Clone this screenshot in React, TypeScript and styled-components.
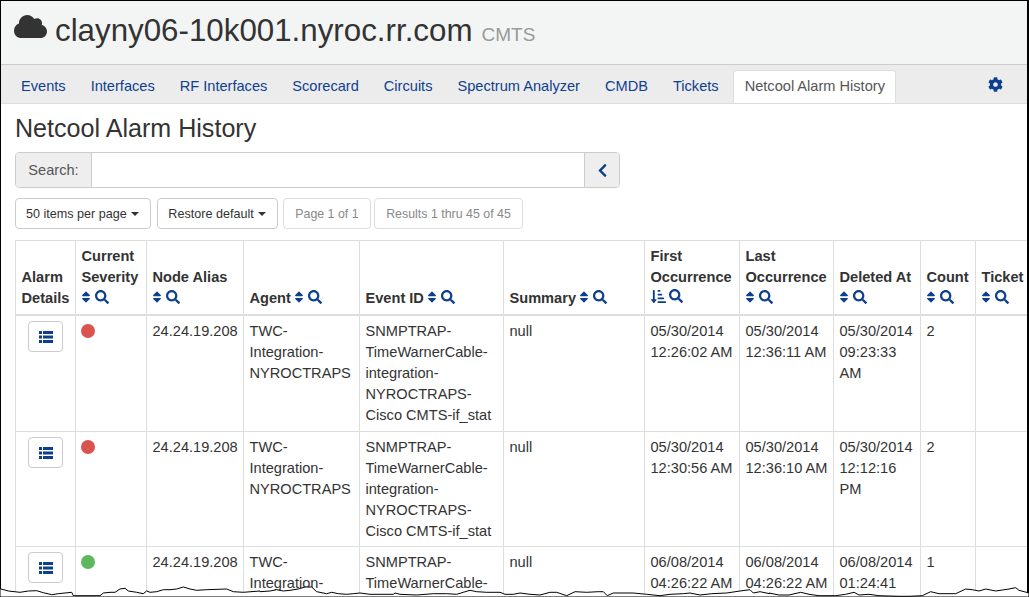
import React from "react";
import styled, { createGlobalStyle } from "styled-components";
import { FaCloud, FaCog, FaSort, FaSearch, FaChevronLeft, FaSortAmountDownAlt } from "react-icons/fa";

const Global = createGlobalStyle`
  html, body { margin: 0; padding: 0; background: #fff; }
  body { font-family: "Liberation Sans", Arial, sans-serif; font-size: 14.6px; color: #333; }
`;

const Viewport = styled.div`
  position: relative;
  width: 1029px;
  height: 597px;
  overflow: hidden;
`;
const Frame = styled.div`
  width: 1029px;
  height: 597px;
  box-sizing: border-box;
  overflow: hidden;
  border-top: 1px solid #000;
  border-left: 1px solid #000;
  border-right: 2px solid #000;
  background: #fff;
`;
const Header = styled.header`
  height: 64px;
  box-sizing: border-box;
  background: #f3f5f5;
  border-bottom: 1px solid #ccc;
  display: flex;
  align-items: baseline;
  padding: 12px 0 0 13px;
`;
const CloudMark = styled.span`
  display: inline-flex;
  width: 41px;
  color: #333;
  font-size: 33px;
  align-self: flex-start;
  margin-top: -3px;
`;
const Title = styled.h1`
  margin: 0;
  font-size: 31.3px;
  font-weight: 400;
  line-height: 36px;
  color: #333;
`;
const Small = styled.small`
  font-size: 19px;
  color: #999;
  margin-left: 9px;
`;
const Nav = styled.nav`
  height: 39px;
  box-sizing: border-box;
  background: #ececec;
  border-bottom: 1px solid #ddd;
  display: flex;
  align-items: flex-end;
  padding-left: 7.5px;
`;
const Tab = styled.a<{ $active?: boolean }>`
  height: 33px;
  line-height: 30px;
  padding: 0 ${(p) => (p.$active ? 10.5 : 11.5)}px;
  margin-left: ${(p) => (p.$active ? 2 : 0)}px;
  border-radius: 4px 4px 0 0;
  box-sizing: border-box;
  color: ${(p) => (p.$active ? "#555" : "#0e3f8e")};
  background: ${(p) => (p.$active ? "#fff" : "transparent")};
  border: 1px solid ${(p) => (p.$active ? "#ddd" : "transparent")};
  border-bottom-color: ${(p) => (p.$active ? "#fff" : "transparent")};
  white-space: nowrap;
`;
const Gear = styled.span`
  margin: 1px 24px 0 auto;
  color: #0e3f8e;
  font-size: 15px;
  align-self: center;
  display: inline-flex;
`;
const Main = styled.main`
  padding: 0 0 0 14px;
`;
const Heading = styled.h2`
  margin: 0;
  padding-top: 9px;
  height: 48px;
  box-sizing: border-box;
  font-size: 25.1px;
  line-height: 30px;
  font-weight: 400;
  color: #333;
`;
const SearchGroup = styled.div`
  display: flex;
  width: 605px;
  height: 36px;
  box-sizing: border-box;
  border: 1px solid #ccc;
  border-radius: 4px;
  overflow: hidden;
`;
const SearchLabel = styled.span`
  width: 76px;
  box-sizing: border-box;
  background: #eee;
  border-right: 1px solid #ccc;
  display: flex;
  align-items: center;
  justify-content: center;
  color: #555;
`;
const SearchInput = styled.div`
  flex: 1;
`;
const SearchButton = styled.span`
  width: 35px;
  box-sizing: border-box;
  background: #eee;
  border-left: 1px solid #ccc;
  color: #0e3f8e;
  font-size: 15px;
  display: flex;
  align-items: center;
  justify-content: center;
`;
const Toolbar = styled.div`
  display: flex;
  margin-top: 10px;
  margin-bottom: 11px;
`;
const ToolButton = styled.span<{ $muted?: boolean; $gap?: number }>`
  height: 31px;
  box-sizing: border-box;
  border: 1px solid ${(p) => (p.$muted ? "#ddd" : "#ccc")};
  border-radius: 4px;
  padding: 0 11.5px 0 ${(p) => (p.$muted ? 11 : 10)}px;
  margin-left: ${(p) => p.$gap ?? 0}px;
  font-size: ${(p) => (p.$muted ? 12.4 : 12.6)}px;
  display: inline-flex;
  align-items: center;
  color: ${(p) => (p.$muted ? "#888" : "#333")};
  background: #fff;
`;
const Caret = styled.span`
  width: 0;
  height: 0;
  margin-left: 4px;
  border-top: 4px solid #333;
  border-left: 4px solid transparent;
  border-right: 4px solid transparent;
`;
const Table = styled.table`
  table-layout: fixed;
  border-collapse: collapse;
  width: 1025px;
  font-size: 14.6px;
  line-height: 20.8px;
`;
const Th = styled.th`
  border: 1px solid #ddd;
  border-bottom: 2px solid #ddd;
  padding: 5px 0 6px 5.5px;
  text-align: left;
  vertical-align: bottom;
  font-weight: 700;
  color: #333;
  white-space: nowrap;
`;
const Td = styled.td`
  border: 1px solid #ddd;
  padding: 5px 0 5px 5.5px;
  vertical-align: top;
  color: #333;
  white-space: nowrap;
`;
const Row = styled.tr`
  &:first-child > td {
    padding-bottom: 6px;
  }
`;
const IconTd = styled(Td)`
  text-align: center;
  padding: 5px 0 4px;
`;
const Controls = styled.span<{ $sorted?: boolean }>`
  display: inline-flex;
  align-items: center;
  gap: ${(p) => (p.$sorted ? 3 : 2)}px;
  margin-left: ${(p) => (p.$sorted ? 0 : -3)}px;
  color: #0e3f8e;
  font-size: 14px;
  vertical-align: -1px;
`;
const DetailsButton = styled.span`
  display: inline-flex;
  width: 35px;
  height: 31px;
  box-sizing: border-box;
  border: 1px solid #ccc;
  border-radius: 4px;
  align-items: center;
  justify-content: center;
  color: #0e3f8e;
`;
const Dot = styled.span<{ $color: string }>`
  display: block;
  width: 14px;
  height: 14px;
  margin: 3px 0 0 -0.5px;
  border-radius: 50%;
  background: ${(p) => p.$color};
`;
const TornEdge = styled.svg`
  position: absolute;
  left: 0;
  bottom: 0;
  display: block;
`;

const ListGlyph = () => (
  <svg width="14" height="12" viewBox="0 0 14 12" fill="currentColor">
    <rect x="0" y="0" width="3" height="3" />
    <rect x="4" y="0" width="10" height="3" />
    <rect x="0" y="4.5" width="3" height="3" />
    <rect x="4" y="4.5" width="10" height="3" />
    <rect x="0" y="9" width="3" height="3" />
    <rect x="4" y="9" width="10" height="3" />
  </svg>
);

const widths = [60, 71, 97, 116, 144, 141, 95, 94, 87, 55, 65];
const heads: { t: string[]; sort?: boolean; inline?: boolean }[] = [
  { t: ["Alarm", "Details"] },
  { t: ["Current", "Severity"] },
  { t: ["Node Alias"] },
  { t: ["Agent"], inline: true },
  { t: ["Event ID"], inline: true },
  { t: ["Summary"], inline: true },
  { t: ["First", "Occurrence"], sort: true },
  { t: ["Last", "Occurrence"] },
  { t: ["Deleted At"] },
  { t: ["Count"] },
  { t: ["Ticket"] },
];
const rows = [
  { c: "#d9534f", f: ["05/30/2014", "12:26:02 AM"], l: ["05/30/2014", "12:36:11 AM"], d: ["05/30/2014", "09:23:33", "AM"], n: "2" },
  { c: "#d9534f", f: ["05/30/2014", "12:30:56 AM"], l: ["05/30/2014", "12:36:10 AM"], d: ["05/30/2014", "12:12:16", "PM"], n: "2" },
  { c: "#5cb85c", f: ["06/08/2014", "04:26:22 AM"], l: ["06/08/2014", "04:26:22 AM"], d: ["06/08/2014", "01:24:41", "AM"], n: "1" },
];
const Lines = ({ v }: { v: string[] }) => (
  <>
    {v.map((s, i) => (
      <React.Fragment key={i}>
        {i > 0 && <br />}
        {s}
      </React.Fragment>
    ))}
  </>
);
const tabs = ["Events", "Interfaces", "RF Interfaces", "Scorecard", "Circuits", "Spectrum Analyzer", "CMDB", "Tickets"];

// The torn lower edge of the screenshot, traced in four runs: [offset, x, y, x, y, ...] in zoomed (3x) units.
const traces: number[][] = [
  [0, 0,35,25,42,60,46,85,42,110,41,130,47,155,53,175,50,195,48,215,46,220,56,300,56,310,48,330,46,345,46,360,36,375,34,385,42,410,46,430,50,440,42,450,46,470,44,490,38,510,38,530,36,550,30,570,36,590,40,620,38,680,36,700,44,730,46,780,42],
  [260, 0,44,30,42,50,38,70,42,90,40,115,36,135,30,155,30,170,44,200,50,215,46,235,50,260,52,280,50,300,48,330,52,400,52,405,48,420,52,470,54,520,50,560,50,590,52,610,46,630,40,650,44,680,46,720,46,735,52,760,52,780,48],
  [520, 0,48,30,52,60,54,90,46,110,46,140,56,165,44,200,46,235,44,250,44,262,56,280,48,340,48,380,52,420,56,450,52,490,50,510,48,540,54,575,50,620,48,660,42,690,38,700,48,720,44,749,50],
  [769, 0,48,30,54,60,54,95,46,120,52,150,56,200,56,230,52,255,46,270,54,300,52,330,56,390,58,420,58,460,56,485,44,510,50,560,50,590,36,610,38,630,42,650,36,680,42,720,36,740,32,750,40,780,48],
];
const edgePoints = traces
  .flatMap(([base, ...pts]) =>
    pts.flatMap((_, i) =>
      i % 2 === 0 ? [`${(base + pts[i] / 3).toFixed(1)} ${(pts[i + 1] / 3).toFixed(1)}`] : []
    )
  )
  .join(" L");
const edge = `M${edgePoints} L1029 20 L0 20 Z`;

export default function App() {
  return (
    <Viewport>
      <Global />
      <Frame>
        <Header>
          <CloudMark>
            <FaCloud />
          </CloudMark>
          <Title>
            clayny06-10k001.nyroc.rr.com<Small>CMTS</Small>
          </Title>
        </Header>
        <Nav>
          {tabs.map((t) => (
            <Tab key={t}>{t}</Tab>
          ))}
          <Tab $active>Netcool Alarm History</Tab>
          <Gear>
            <FaCog />
          </Gear>
        </Nav>
        <Main>
          <Heading>Netcool Alarm History</Heading>
          <SearchGroup>
            <SearchLabel>Search:</SearchLabel>
            <SearchInput />
            <SearchButton>
              <FaChevronLeft />
            </SearchButton>
          </SearchGroup>
          <Toolbar>
            <ToolButton>
              50 items per page
              <Caret />
            </ToolButton>
            <ToolButton $gap={6}>
              Restore default
              <Caret />
            </ToolButton>
            <ToolButton $muted $gap={5}>
              Page 1 of 1
            </ToolButton>
            <ToolButton $muted $gap={3}>
              Results 1 thru 45 of 45
            </ToolButton>
          </Toolbar>
          <Table>
            <colgroup>
              {widths.map((w, i) => (
                <col key={i} width={w} />
              ))}
            </colgroup>
            <thead>
              <tr>
                {heads.map((h, i) => (
                  <Th key={i}>
                    <Lines v={h.t} />
                    {i > 0 && (
                      <>
                        {h.inline ? " " : <br />}
                        <Controls $sorted={h.sort}>
                          {h.sort ? <FaSortAmountDownAlt size={15} /> : <FaSort />}
                          <FaSearch />
                        </Controls>
                      </>
                    )}
                  </Th>
                ))}
              </tr>
            </thead>
            <tbody>
              {rows.map((r, i) => (
                <Row key={i}>
                  <IconTd>
                    <DetailsButton>
                      <ListGlyph />
                    </DetailsButton>
                  </IconTd>
                  <Td>
                    <Dot $color={r.c} />
                  </Td>
                  <Td>24.24.19.208</Td>
                  <Td>
                    <Lines v={["TWC-", "Integration-", "NYROCTRAPS"]} />
                  </Td>
                  <Td>
                    <Lines v={["SNMPTRAP-", "TimeWarnerCable-", "integration-", "NYROCTRAPS-", "Cisco CMTS-if_stat"]} />
                  </Td>
                  <Td>null</Td>
                  <Td>
                    <Lines v={r.f} />
                  </Td>
                  <Td>
                    <Lines v={r.l} />
                  </Td>
                  <Td>
                    <Lines v={r.d} />
                  </Td>
                  <Td>{r.n}</Td>
                  <Td />
                </Row>
              ))}
            </tbody>
          </Table>
        </Main>
      </Frame>
      <TornEdge width="1029" height="20" viewBox="0 0 1029 20">
        <path d={edge} fill="#fff" stroke="#000" strokeWidth="1" />
      </TornEdge>
    </Viewport>
  );
}
